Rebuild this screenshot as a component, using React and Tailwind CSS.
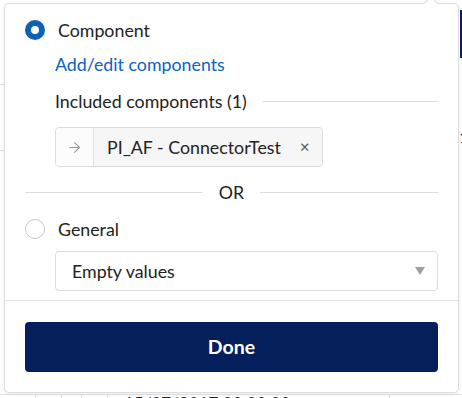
import { ArrowRight } from "lucide-react";

function Radio({ checked }) {
    if (checked) {
        return (
            <span className="box-border block h-5 w-5 shrink-0 rounded-full border-[6px] border-[#0b62b5] bg-white" />
        );
    }
    return (
        <span className="box-border block h-5 w-5 shrink-0 rounded-full border border-[#c8c8c8] bg-white" />
    );
}

function Rule({ className = "" }) {
    return <div className={`h-px flex-1 bg-[#dedede] ${className}`} />;
}

export default function App() {
    return (
        <div
            className="relative h-[398px] w-[462px] overflow-hidden bg-white text-[#222]"
            style={{ fontFamily: "Lato, 'Open Sans', sans-serif" }}
        >
            {/* page behind the popover */}
            <div className="absolute right-0 top-[10px] h-[48px] w-[2px] bg-[#0a1f5c]" />
            <div className="absolute right-[-6px] top-[126px] text-[15px]">1</div>
            <div className="absolute left-0 top-[84px] h-px w-2 bg-[#e2e2e2]" />
            <div className="absolute left-0 top-[150px] h-px w-2 bg-[#e2e2e2]" />
            <div className="absolute left-0 top-[394px] flex h-8 w-full border-t border-[#e2e2e2] text-[17px]">
                <div className="w-[36px] border-r border-[#e2e2e2]" />
                <div className="w-[26px] border-r border-[#e2e2e2]" />
                <div className="w-[20px] border-r border-[#e2e2e2]" />
                <div className="w-[26px] border-r border-[#e2e2e2]" />
                <div className="w-[282px] border-r border-[#e2e2e2] pl-4 leading-none">
                    15/07/2017 00:00:00
                </div>
            </div>

            {/* popover */}
            <div className="relative ml-[4px] mt-[3px] flex h-[390px] w-[455px] flex-col rounded-[5px] border border-[#dcdcdc] bg-white shadow-[0_1px_4px_rgba(0,0,0,0.08)]">
                <div className="absolute left-[421px] top-[-6px] h-[10px] w-[10px] rotate-45 border-l border-t border-[#dcdcdc] bg-white" />

                <div className="flex flex-col px-5 pb-[9px] pt-[14px] text-[17.8px]">
                    <label className="flex h-6 items-center gap-[13px]">
                        <Radio checked />
                        <span>Component</span>
                    </label>

                    <a className="ml-[30px] mt-[10px] block h-6 leading-6 text-[#0b62c0]">
                        Add/edit components
                    </a>

                    <div className="ml-[30px] mt-[13px] flex h-6 items-center gap-4">
                        <span>Included components (1)</span>
                        <Rule />
                    </div>

                    <div className="ml-[30px] mt-[14px] flex h-[40px] self-start overflow-hidden rounded-[4px] border border-[#dcdcdc]">
                        <div className="flex w-[38px] items-center justify-center border-r border-[#e2e2e2] bg-[#fcfcfc]">
                            <ArrowRight size={17} strokeWidth={1.5} className="text-[#9a9a9a]" />
                        </div>
                        <div className="flex items-center bg-[#f6f6f6] pl-[13px] pr-[12px]">
                            <span>PI_AF - ConnectorTest</span>
                            <span className="ml-[19px] text-[17px] text-[#555]">×</span>
                        </div>
                    </div>

                    <div className="mt-[13px] flex h-6 items-center gap-4">
                        <Rule />
                        <span>OR</span>
                        <Rule />
                    </div>

                    <label className="mt-[13px] flex h-6 items-center gap-[13px]">
                        <Radio />
                        <span>General</span>
                    </label>

                    <div className="ml-[30px] mt-[10px] flex h-[40px] items-center justify-between rounded-[4px] border border-[#dcdcdc] pl-4 pr-[12px]">
                        <span>Empty values</span>
                        <svg width="10" height="8" viewBox="0 0 10 8">
                            <path d="M0 0 H10 L5 8 Z" fill="#a0a0a0" />
                        </svg>
                    </div>
                </div>

                <div className="border-t border-[#e2e2e2] px-5 pt-[21px]">
                    <button className="flex h-[50px] w-full items-center justify-center rounded-[4px] bg-[#041f5c] text-[19.5px] font-bold text-white">
                        Done
                    </button>
                </div>
            </div>
        </div>
    );
}
